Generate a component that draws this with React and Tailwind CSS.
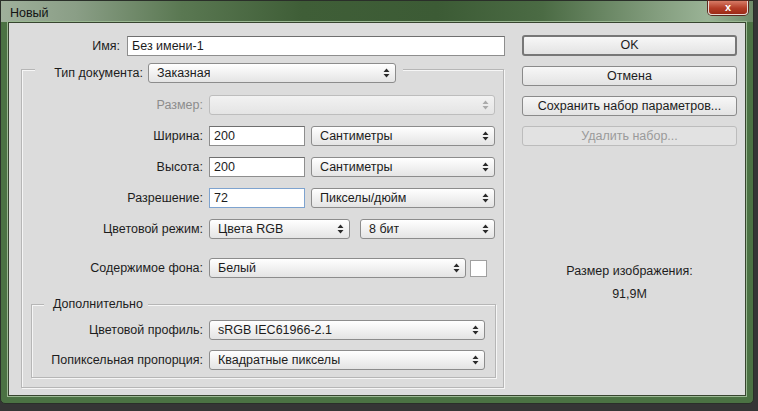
import React from 'react';

function Arrows({ disabled }) {
  return (
    <svg width="7" height="10" viewBox="0 0 7 10" className={disabled ? 'text-[#aaaaaa]' : 'text-[#2a2a2a]'}>
      <path d="M3.5 0.5L6.5 4H0.5Z M0.5 6H6.5L3.5 9.5Z" fill="currentColor" />
    </svg>
  );
}

function Select({ value, w, disabled }) {
  return (
    <div
      className={`flex h-[20px] shrink-0 items-center justify-between rounded-[3px] border pl-[8px] pr-[5px] ${w} ${
        disabled
          ? 'border-[#bdbdbd] bg-[linear-gradient(#f2f2f2,#e4e4e4)]'
          : 'border-[#8c8c8c] bg-[linear-gradient(#ffffff,#e4e4e4)]'
      }`}
    >
      <span className="truncate">{value}</span>
      <Arrows disabled={disabled} />
    </div>
  );
}

function Input({ value, w, focus }) {
  return (
    <div
      className={`flex h-[20px] shrink-0 items-center border bg-white pl-[4px] ${w} ${
        focus ? 'border-[#7ea3cf]' : 'border-[#8e8e8e] border-t-[#6f6f6f]'
      }`}
    >
      {value}
    </div>
  );
}

function Row({ label, labelW, className = '', children }) {
  return (
    <div className={`flex h-[20px] items-center ${className}`}>
      <span className={`${labelW} shrink-0 pr-[6px] text-right`}>{label}</span>
      {children}
    </div>
  );
}

function Button({ children, primary, disabled, className = '' }) {
  return (
    <div
      className={`flex items-center justify-center rounded-[3px] ${className} ${
        primary
          ? 'h-[21px] border-2 border-[#777777] bg-[linear-gradient(#f7f7f7,#e3e3e3)]'
          : disabled
          ? 'h-[20px] border border-[#bcbcbc] bg-[#e2e2e2] text-[#9a9a9a]'
          : 'h-[20px] border border-[#8a8a8a] bg-[linear-gradient(#f7f7f7,#e3e3e3)]'
      }`}
    >
      {children}
    </div>
  );
}

export default function App() {
  return (
    <div className="h-[411px] w-[758px] overflow-hidden bg-[#353535] font-['Liberation_Sans','DejaVu_Sans',sans-serif] text-[12.5px] text-[#1c1c1c]">
      {/* window frame */}
      <div className="flex h-[404px] w-[754px] flex-col rounded-b-[5px] border border-[#2a2f29] bg-[#4b7243]">
        {/* title bar */}
        <div className="flex h-[21px] shrink-0 items-start justify-between bg-[linear-gradient(90deg,#9fb09b_0%,#8a9e86_10%,#5a7852_24%,#3f5e37_40%,#3c5b35_58%,#4b6b44_72%,#86a081_88%,#9ab396_94%,#6f8c69_100%)]">
          <span className="ml-[9px] mt-[3px] text-[#141414]">Новый</span>
          <div className="mr-[5px] flex h-[14px] w-[40px] items-center justify-center rounded-b-[4px] border border-t-0 border-[#e9d9d4] bg-[linear-gradient(#d77b66,#b43d27_55%,#9b2b17)] shadow-[0_0_0_1px_#5b2a20]">
            <span className="text-[11px] font-bold leading-none text-white">x</span>
          </div>
        </div>

        {/* content */}
        <div className="mx-[7px] mb-[7px] flex flex-1 border border-[#37452f] bg-[#dcdcdc] pl-[12px] pr-[10px] pt-[12px] shadow-[0_0_0_1px_#9bb893]">
          {/* left column */}
          <div className="flex w-[483px] shrink-0 flex-col">
            <div className="mt-[1px] flex h-[20px] items-center">
              <span className="w-[106px] shrink-0 pr-[7px] text-right">Имя:</span>
              <Input value="Без имени-1" w="w-[378px]" />
            </div>

            {/* document type group */}
            <div className="mt-[13px] flex flex-col border border-[#b6b6b6] pb-[9px] shadow-[inset_1px_1px_0_#f6f6f6,1px_1px_0_#f6f6f6]">
              <div className="ml-[13px] -mt-[7px] flex h-[20px] w-[368px] items-center bg-[#dcdcdc]">
                <span className="w-[113px] shrink-0 pr-[5px] text-right">Тип документа:</span>
                <Select value="Заказная" w="w-[248px]" />
              </div>

              <Row label="Размер:" labelW="w-[187px]" className="mt-[12px] text-[#8c8c8c]">
                <Select value="" w="w-[286px]" disabled />
              </Row>
              <Row label="Ширина:" labelW="w-[187px]" className="mt-[11px]">
                <Input value="200" w="w-[96px]" />
                <div className="w-[6px]" />
                <Select value="Сантиметры" w="w-[184px]" />
              </Row>
              <Row label="Высота:" labelW="w-[187px]" className="mt-[11px]">
                <Input value="200" w="w-[96px]" />
                <div className="w-[6px]" />
                <Select value="Сантиметры" w="w-[184px]" />
              </Row>
              <Row label="Разрешение:" labelW="w-[187px]" className="mt-[11px]">
                <Input value="72" w="w-[96px]" focus />
                <div className="w-[6px]" />
                <Select value="Пикселы/дюйм" w="w-[184px]" />
              </Row>
              <Row label="Цветовой режим:" labelW="w-[187px]" className="mt-[11px]">
                <Select value="Цвета RGB" w="w-[141px]" />
                <div className="w-[10px]" />
                <Select value="8 бит" w="w-[135px]" />
              </Row>
              <Row label="Содержимое фона:" labelW="w-[187px]" className="mt-[19px]">
                <Select value="Белый" w="w-[257px]" />
                <div className="ml-[4px] h-[17px] w-[17px] border border-[#a0a0a0] bg-white" />
              </Row>

              {/* advanced group */}
              <div className="ml-[9px] mt-[26px] flex w-[465px] flex-col border border-[#b6b6b6] pb-[7px] shadow-[inset_1px_1px_0_#f6f6f6,1px_1px_0_#f6f6f6]">
                <div className="ml-[12px] -mt-[8px] h-[14px] self-start bg-[#dcdcdc] pl-[9px] pr-[5px] leading-[14px]">
                  Дополнительно
                </div>
                <Row label="Цветовой профиль:" labelW="w-[177px]" className="mt-[9px]">
                  <Select value="sRGB IEC61966-2.1" w="w-[276px]" />
                </Row>
                <Row label="Попиксельная пропорция:" labelW="w-[177px]" className="mt-[10px]">
                  <Select value="Квадратные пикселы" w="w-[276px]" />
                </Row>
              </div>
            </div>
          </div>

          {/* right column */}
          <div className="ml-[18px] flex w-[215px] shrink-0 flex-col">
            <Button primary>OK</Button>
            <Button className="mt-[10px]">Отмена</Button>
            <Button className="mt-[10px]">Сохранить набор параметров...</Button>
            <Button className="mt-[10px]" disabled>
              Удалить набор...
            </Button>
            <div className="mt-[118px] text-center leading-[14px]">Размер изображения:</div>
            <div className="mt-[9px] text-center leading-[14px]">91,9M</div>
          </div>
        </div>
      </div>
    </div>
  );
}
